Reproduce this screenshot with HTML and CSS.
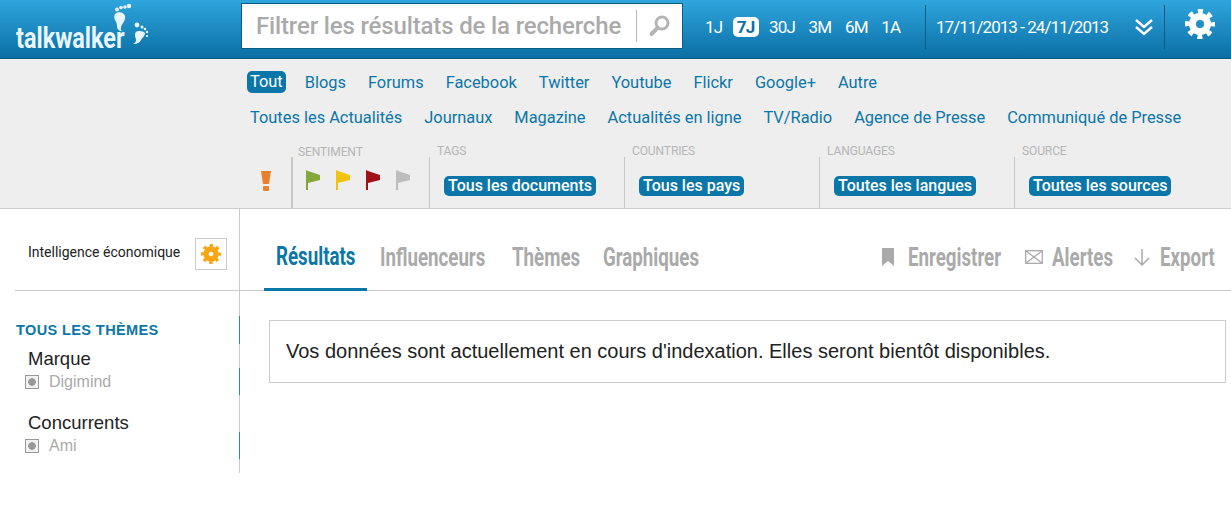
FILE: index.html
```html
<!DOCTYPE html>
<html lang="fr">
<head>
<meta charset="utf-8">
<title>talkwalker</title>
<link rel="stylesheet" href="styles.css">
</head>
<body>
<header class="topbar">
  <div class="logo">
    <span class="logo-text">talkwalker</span>
    <svg class="logo-feet" width="50" height="50" viewBox="0 0 50 50" fill="#e6f6fb">
      <path d="M13 13c3-3 9-2 10 2 1 5-3 7-4 11-.5 2 0 3 1 4-3 0-5-2-5-5 0-3-1-4-2-6-1-2-1-4 0-6z"/>
      <circle cx="15" cy="8.500" r="2"/><circle cx="19" cy="6.500" r="1.800"/><circle cx="23" cy="6" r="1.800"/><circle cx="27" cy="5" r="2.200"/>
      <path d="M34 31c2-2 8-1 9 1 0 3-3 5-4 7-1 2-3 4-8 4 2-1 3-2 3-4 0-2-1-3-1-4 0-2 0-3 1-4z"/>
      <circle cx="35" cy="24" r="2.400"/><circle cx="40" cy="26" r="1.500"/><circle cx="43" cy="28" r="1.300"/><circle cx="45" cy="31" r="1.200"/><circle cx="45" cy="35" r="1.100"/>
    </svg>
  </div>
  <div class="search">
    <span class="search-text">Filtrer les résultats de la recherche</span>
    <span class="search-btn">
      <svg width="24" height="24" viewBox="0 0 24 24" fill="none" stroke="#b5b5b5"><circle cx="14" cy="9" r="6" stroke-width="3"/><path d="M9.500 14L3.500 20" stroke-width="4" stroke-linecap="round"/></svg>
    </span>
  </div>
  <nav class="ranges">
    <span class="range">1J</span>
    <span class="range range-on">7J</span>
    <span class="range">30J</span>
    <span class="range">3M</span>
    <span class="range">6M</span>
    <span class="range">1A</span>
  </nav>
  <div class="dates">
    <span class="date-text">17/11/2013 - 24/11/2013</span>
    <svg width="20" height="20" viewBox="0 0 20 20" fill="none" stroke="#fff" stroke-width="2.400"><path d="M2 3l8 7 8-7M2 10l8 7 8-7"/></svg>
  </div>
  <div class="settings">
    <svg width="30" height="30" viewBox="0 0 30 30" fill="none" stroke="#fff"><circle cx="15" cy="15" r="12" stroke-width="6" stroke-dasharray="4.712 4.712" stroke-dashoffset="2.356"/><circle cx="15" cy="15" r="7.500" stroke-width="7"/></svg>
  </div>
</header>

<section class="filters">
  <div class="links">
    <a class="link link-on">Tout</a><a class="link">Blogs</a><a class="link">Forums</a><a class="link">Facebook</a><a class="link">Twitter</a><a class="link">Youtube</a><a class="link">Flickr</a><a class="link">Google+</a><a class="link">Autre</a>
  </div>
  <div class="links links-second">
    <a class="link">Toutes les Actualités</a><a class="link">Journaux</a><a class="link">Magazine</a><a class="link">Actualités en ligne</a><a class="link">TV/Radio</a><a class="link">Agence de Presse</a><a class="link">Communiqué de Presse</a>
  </div>
  <div class="facets">
    <div class="alert-cell">
      <svg width="14" height="22" viewBox="0 0 14 22" fill="#e8802c"><path d="M2 1h10l-2 13H4z"/><rect x="4" y="16" width="6" height="5" rx="1"/></svg>
    </div>
    <div class="facet facet-sentiment">
      <span class="facet-label">SENTIMENT</span>
      <div class="flags">
        <svg class="flag" width="16" height="20" viewBox="0 0 16 20"><path fill="#84a83c" d="M1 0l2 1 12 4v5L3 13v7H1z"/></svg>
        <svg class="flag" width="16" height="20" viewBox="0 0 16 20"><path fill="#f2c40f" d="M1 0l2 1 12 4v5L3 13v7H1z"/></svg>
        <svg class="flag" width="16" height="20" viewBox="0 0 16 20"><path fill="#a01218" d="M1 0l2 1 12 4v5L3 13v7H1z"/></svg>
        <svg class="flag" width="16" height="20" viewBox="0 0 16 20"><path fill="#bdbdbd" d="M1 0l2 1 12 4v5L3 13v7H1z"/></svg>
      </div>
    </div>
    <div class="facet"><span class="facet-label">TAGS</span><span class="pill">Tous les documents</span></div>
    <div class="facet"><span class="facet-label">COUNTRIES</span><span class="pill">Tous les pays</span></div>
    <div class="facet"><span class="facet-label">LANGUAGES</span><span class="pill">Toutes les langues</span></div>
    <div class="facet"><span class="facet-label">SOURCE</span><span class="pill">Toutes les sources</span></div>
  </div>
</section>

<main class="main">
  <aside class="sidebar">
    <div class="side-head">
      <span class="side-title">Intelligence économique</span>
      <span class="side-gear">
        <svg width="20" height="20" viewBox="0 0 30 30" fill="none" stroke="#f9a612"><circle cx="15" cy="15" r="12" stroke-width="6" stroke-dasharray="4.712 4.712" stroke-dashoffset="2.356"/><circle cx="15" cy="15" r="7.500" stroke-width="8"/></svg>
      </span>
    </div>
    <div class="theme-gap"></div>
    <div class="theme-row theme-all mark">TOUS LES THÈMES</div>
    <div class="theme-row theme-name">Marque</div>
    <div class="theme-row theme-sub mark"><span class="check"></span>Digimind</div>
    <div class="theme-row theme-space"></div>
    <div class="theme-row theme-name">Concurrents</div>
    <div class="theme-row theme-sub mark"><span class="check"></span>Ami</div>
    <div class="theme-row theme-end"></div>
  </aside>
  <div class="content">
    <div class="tabs">
      <a class="tab tab-on"><span class="squeezed w-results">Résultats</span></a>
      <a class="tab"><span class="squeezed w-influencers">Influenceurs</span></a>
      <a class="tab"><span class="squeezed w-themes">Thèmes</span></a>
      <a class="tab"><span class="squeezed w-charts">Graphiques</span></a>
      <div class="actions">
        <a class="action action-save">
          <svg width="12" height="18" viewBox="0 0 12 18" fill="#aaa"><path d="M0 0h12v18l-6-5-6 5z"/></svg>
          <span class="squeezed w-save">Enregistrer</span>
        </a>
        <a class="action">
          <svg width="18" height="14" viewBox="0 0 18 14" fill="none" stroke="#aaa" stroke-width="1.300"><rect x=".7" y=".7" width="16.600" height="12.600"/><path d="M1 1l16 12M17 1L1 13"/></svg>
          <span class="squeezed w-alerts">Alertes</span>
        </a>
        <a class="action">
          <svg width="18" height="18" viewBox="0 0 18 18" fill="none" stroke="#aaa" stroke-width="1.500"><path d="M9 1v16M2 10l7 7 7-7"/></svg>
          <span class="squeezed w-export">Export</span>
        </a>
      </div>
    </div>
    <div class="notice">Vos données sont actuellement en cours d'indexation. Elles seront bientôt disponibles.</div>
  </div>
</main>
</body>
</html>
```
FILE: styles.css
```css
* { box-sizing: border-box; }
html, body { margin: 0; padding: 0; }
body { background: #fff; font-family: Roboto, "Liberation Sans", sans-serif; color: #222; width: 1231px; overflow: hidden; }

.topbar { height: 59px; display: flex; align-items: flex-start; background: linear-gradient(#2fa5dd, #0a6fa5); border-bottom: 1px solid #0b5c80; color: #fff; }
.logo { width: 241px; height: 58px; position: relative; flex: none; }
.logo-text { position: absolute; left: 16px; top: 22px; font-size: 30px; font-weight: 700; color: #e9f7fc; line-height: 32px; transform: scaleX(.78); transform-origin: 0 50%; }
.logo-feet { position: absolute; left: 102px; top: 1px; }

.search { flex: none; width: 442px; height: 46px; margin-top: 3px; background: #fff; border: 1px solid #0b5c80; display: flex; align-items: center; padding-left: 14px; }
.search-text { flex: 1; font-size: 24px; color: #aaa; font-weight: 500; letter-spacing: -.15px; white-space: nowrap; }
.search-btn { width: 46px; height: 32px; flex: none; border-left: 1px solid #bbb; display: flex; align-items: center; justify-content: center; }

.ranges { flex: none; width: 242px; height: 46px; margin-top: 3px; padding: 2px 0 0 22px; display: flex; align-items: center; gap: 13.500px; font-size: 17px; letter-spacing: -.8px; }
.range { line-height: 20px; }
.range-on { background: #fff; color: #0a6fa5; border-radius: 5px; padding: 0 4px; margin: 0 -3px; font-weight: 700; }

.dates { flex: none; width: 240px; height: 44px; margin-top: 5px; border-left: 1px solid #0b5c80; border-right: 1px solid #0b5c80; display: flex; align-items: center; justify-content: space-between; padding: 0 10px; font-size: 17px; letter-spacing: -.95px; }
.date-text { white-space: nowrap; }

.settings { flex: 1; display: flex; justify-content: center; padding-left: 4px; margin-top: 9px; }

.filters { height: 150px; background: #eee; border-bottom: 1px solid #ccc; }
.links { display: flex; padding-left: 247px; height: 46px; align-items: center; gap: 22px; font-size: 16.400px; color: #0b76a8; }
.links-second { height: 24px; padding-left: 250px; }
.link { white-space: nowrap; }
.link-on { background: #0b76a8; color: #fff; padding: 0 3px; border-radius: 5px; line-height: 22px; margin-right: -3px; }

.facets { display: flex; height: 79px; padding-left: 258px; }
.alert-cell { width: 33px; display: flex; align-items: flex-start; padding: 41px 17px 0 0; justify-content: center; flex: none; }
.facet { width: 195px; flex: none; position: relative; margin-top: 28px; border-left: 1px solid #c8c8c8; padding: 19px 0 0 14px; }
.facet-sentiment { width: 138px; border-left: 2px solid #c8c8c8; padding: 13px 0 0 12px; }
.facet-label { position: absolute; left: 7px; top: -13px; font-size: 12px; color: #b5b5b5; white-space: nowrap; letter-spacing: -.1px; }
.facet-sentiment .facet-label { top: -12px; left: 5px; }
.flags { display: flex; gap: 14px; }
.pill { display: inline-block; background: #0b76a8; color: #fff; font-size: 16px; font-weight: 500; line-height: 20px; padding: 0 4px; border-radius: 5px; white-space: nowrap; }

.main { display: flex; height: 265px; }
.sidebar { width: 240px; flex: none; }
.side-head { height: 82px; margin-left: 15px; border-bottom: 1px solid #ccc; border-right: 1px solid #ccc; display: flex; align-items: center; padding-left: 13px; }
.side-title { font-size: 14px; width: 167px; white-space: nowrap; padding-top: 5px; line-height: 16px; }
.side-gear { width: 32px; height: 32px; border: 1px solid #ccc; display: flex; align-items: center; justify-content: center; margin-top: 8px; }
.theme-gap { height: 25px; border-right: 1px solid #ccc; }
.theme-row { border-right: 1px solid #ccc; padding-left: 28px; }
.theme-row.mark { border-right-color: #2a8bb5; }
.theme-all { height: 28px; padding-left: 16px; font-family: "Liberation Sans", sans-serif; font-size: 14.500px; font-weight: 700; color: #0b76a8; padding-top: 6px; letter-spacing: .4px; }
.theme-name { height: 24px; padding-top: 3px; font-family: "Liberation Sans", sans-serif; font-size: 18.500px; line-height: 24px; color: #222; }
.theme-sub { height: 27px; padding-left: 25px; font-family: "Liberation Sans", sans-serif; font-size: 16px; line-height: 27px; color: #aaa; display: flex; align-items: center; }
.check { width: 14px; height: 14px; border: 1px solid #999; margin-right: 10px; background: radial-gradient(circle, #999 3.500px, #f2f2f2 4px); flex: none; }
.theme-space { height: 13px; }
.theme-end { height: 14px; }

.content { flex: 1; min-width: 0; }
.tabs { height: 82px; border-bottom: 1px solid #ccc; display: flex; align-items: stretch; padding-left: 24px; font-size: 26px; font-weight: 700; color: #aaa; }
.tab { display: flex; align-items: center; padding: 14px 12px 0; margin-right: 1px; white-space: nowrap; }
.tab-on { color: #0b76a8; border-bottom: 3px solid #0b76a8; margin-bottom: -1px; padding-top: 15px; }
.squeezed { display: block; white-space: nowrap; transform: scaleX(.72); transform-origin: 0 50%; }
.w-results { width: 79px; }
.w-influencers { width: 107px; }
.w-themes { width: 66px; }
.w-charts { width: 97px; }
.w-save { width: 95px; }
.w-alerts { width: 59px; }
.w-export { width: 54px; }
.actions { margin-left: auto; display: flex; align-items: center; gap: 22px; padding: 14px 17px 0 0; }
.action { display: flex; align-items: center; gap: 9px; white-space: nowrap; }
.action-save { gap: 14px; }
.notice { margin: 29px 5px 0 29px; height: 63px; border: 1px solid #ccc; padding: 0 16px; display: flex; align-items: center; font-family: "Liberation Sans", sans-serif; font-size: 20px; color: #222; }
```
